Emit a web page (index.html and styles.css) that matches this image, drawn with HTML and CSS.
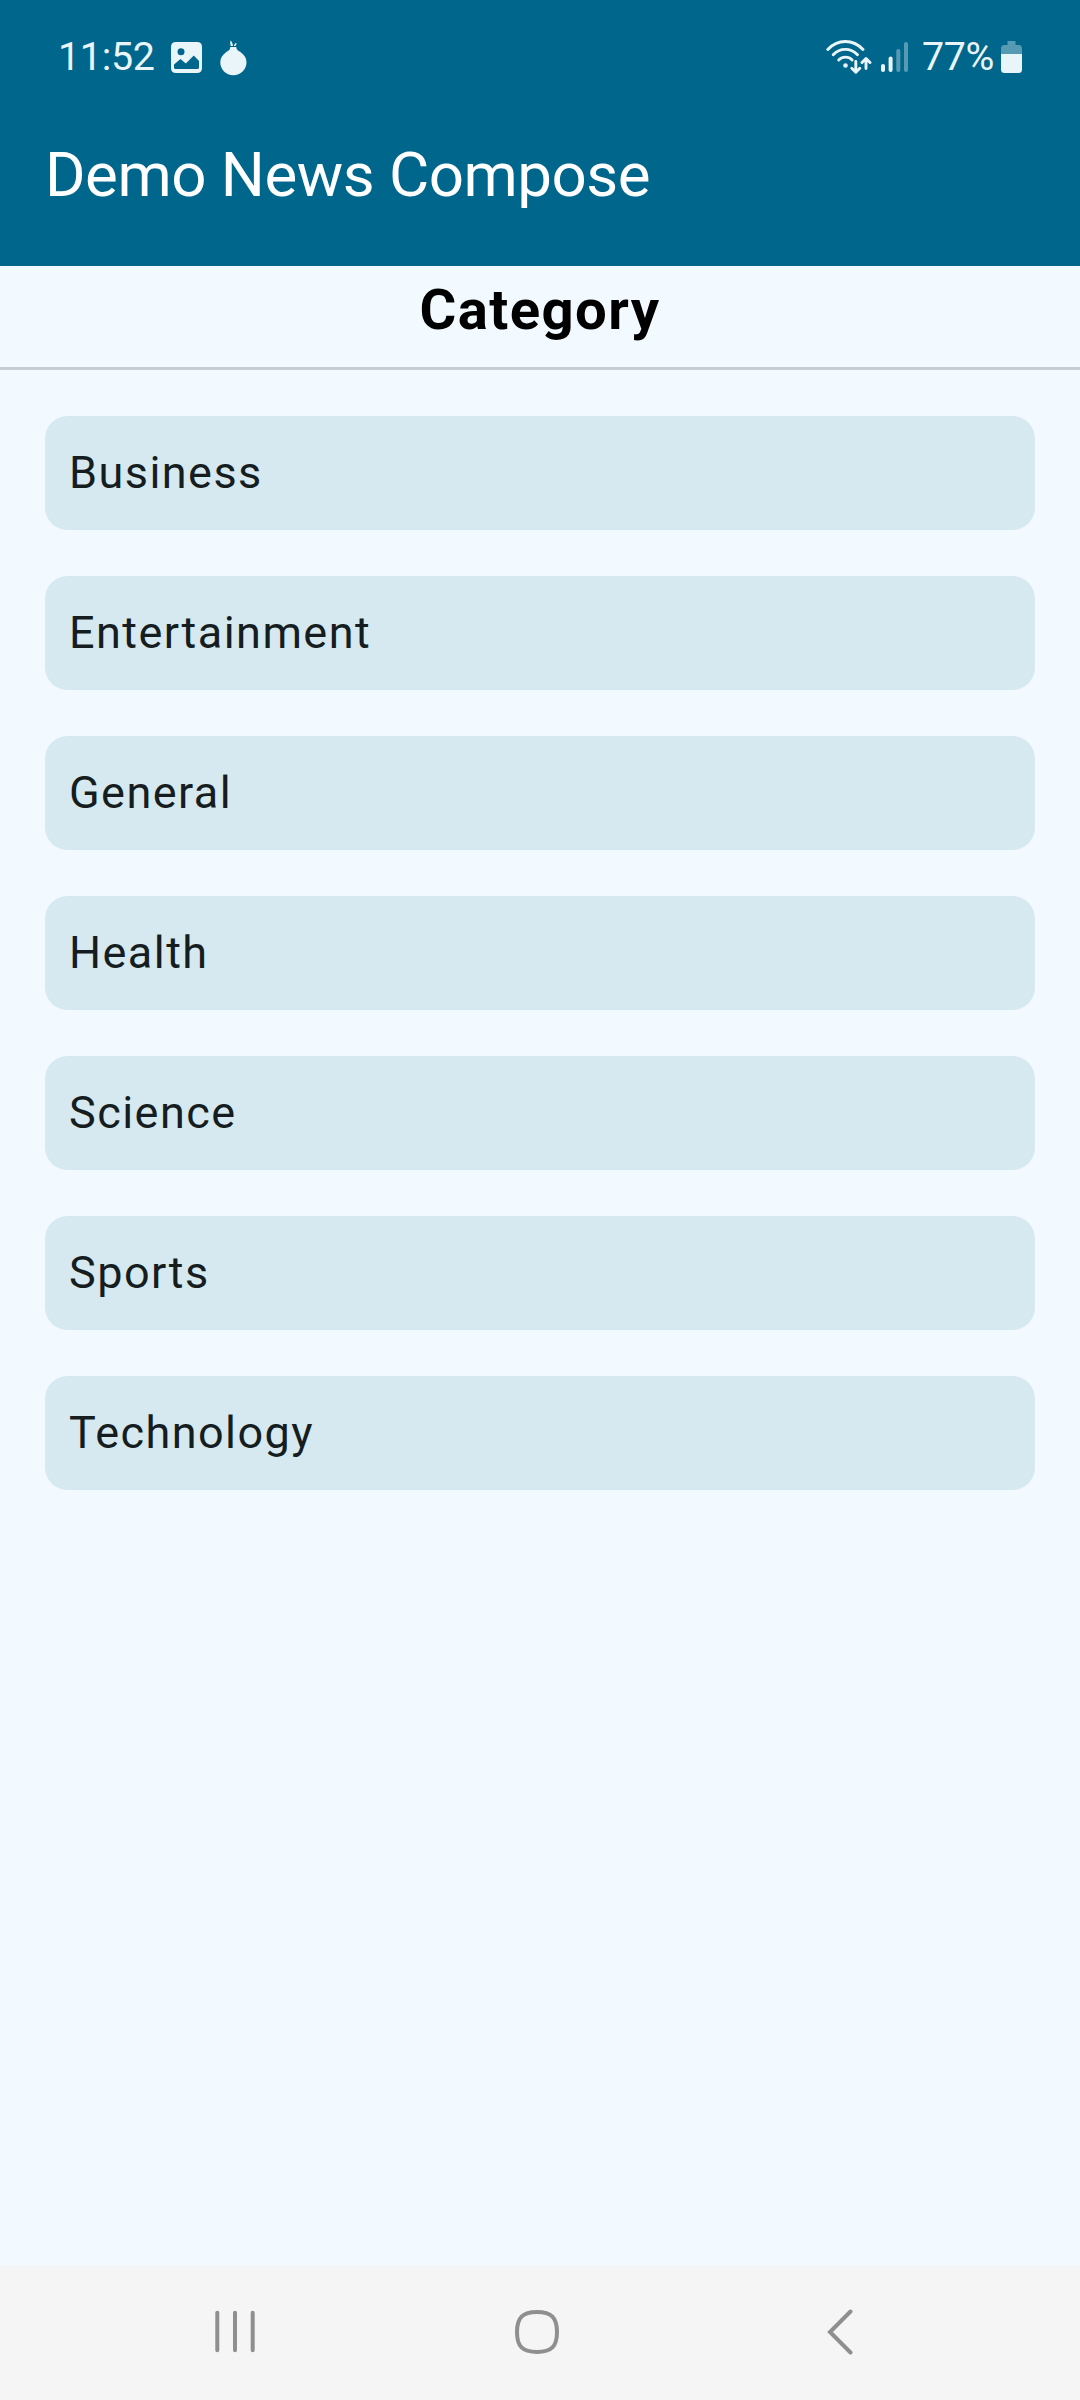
FILE: index.html
```html
<!DOCTYPE html>
<html lang="en">
<head>
<meta charset="utf-8">
<title>Demo News Compose</title>
<link rel="stylesheet" href="styles.css">
</head>
<body>
<div class="screen">
  <header class="app-header">
    <div class="status-bar">
      <div class="status-group">
        <span class="clock">11:52</span>
        <svg class="icon-image" width="31" height="31" viewBox="0 0 31 31">
          <path fill-rule="evenodd" d="M5 0H26Q31 0 31 5V26Q31 31 26 31H5Q0 31 0 26V5Q0 0 5 0ZM10 6.3A3.5 3.5 0 1 0 10 13.3A3.5 3.5 0 1 0 10 6.3ZM3 22.5V25.5Q3 27 4.500 27H26.500Q28 27 28 25.500V19L22.800 13.500L14.800 21.500L9.500 17Z"/>
        </svg>
        <svg class="icon-onion" width="27" height="36" viewBox="0 0 27 36">
          <path d="M10.300 7H16.300C16.300 10 18.500 10.600 21 12.400C24.300 14.700 26.500 18 26.500 22.200C26.500 29.500 20.700 35.200 13.300 35.200C6 35.200.3 29.500.3 22.200C.3 18 2.500 14.700 5.800 12.400C8.300 10.600 10.300 10 10.300 7Z"/>
          <path d="M10.800 6C10 3.500 10 1.800 10.800.2C11.700 2 12.700 3 13 5.900ZM14 5.900C14.300 4.200 15 3.200 16.400 2.900C16.700 4 16.300 5 15.300 6Z"/>
        </svg>
      </div>
      <div class="status-group">
        <svg class="icon-wifi" width="46" height="36" viewBox="0 0 46 36">
          <g fill="none" stroke="currentColor" stroke-width="2.900" stroke-linecap="round" stroke-linejoin="round">
            <path d="M1.800 10.500C11.500-.2 27-.2 37 10.500"/>
            <path d="M7.200 15.800C14 8.500 24.600 8.500 31.500 15.800"/>
            <path d="M12.700 21C16.600 17.200 22.400 17.200 26.200 21"/>
            <path d="M29.800 22.500V33M25.800 29.300L29.800 33.300L33.800 29.300"/>
            <path d="M40 29.500V20M36 23.500L40 19.500L44 23.500"/>
          </g>
          <circle cx="19.500" cy="26.500" r="2.300"/>
        </svg>
        <svg class="icon-signal" width="28" height="30" viewBox="0 0 28 30">
          <rect x="0" y="22" width="4" height="8" rx="2"/>
          <rect x="7.600" y="14.500" width="4" height="15.500" rx="2"/>
          <rect class="faint" x="15.300" y="7" width="4" height="23" rx="2"/>
          <rect class="faint" x="23" y="0" width="4" height="30" rx="2"/>
        </svg>
        <span class="battery-level">77%</span>
        <svg class="icon-battery" width="21" height="32" viewBox="0 0 21 32">
          <path class="faint" d="M6.500 0H14.500V4H17.500Q21 4 21 7.500V13H0V7.500Q0 4 3.500 4H6.500Z"/>
          <path d="M0 13H21V28.500Q21 32 17.500 32H3.500Q0 32 0 28.500Z"/>
        </svg>
      </div>
    </div>
    <h1 class="app-title">Demo News Compose</h1>
  </header>
  <main class="content">
    <h2 class="section-title">Category</h2>
    <ul class="category-list">
      <li class="category">Business</li>
      <li class="category">Entertainment</li>
      <li class="category">General</li>
      <li class="category">Health</li>
      <li class="category">Science</li>
      <li class="category">Sports</li>
      <li class="category">Technology</li>
    </ul>
  </main>
  <nav class="nav-bar">
    <svg width="40" height="46" viewBox="0 0 40 46">
      <path d="M2.300 3.800V41.200M20 3.800V41.200M37.700 3.800V41.200"/>
    </svg>
    <svg class="home" width="44" height="46" viewBox="0 0 44 46">
      <path d="M22 3C36.500 3 42 8.500 42 23C42 37.500 36.500 43 22 43C7.500 43 2 37.500 2 23C2 8.500 7.500 3 22 3Z"/>
    </svg>
    <svg width="26" height="46" viewBox="0 0 26 46">
      <path d="M23.500 2.500L3 23L23.500 43.500"/>
    </svg>
  </nav>
</div>
</body>
</html>
```
FILE: styles.css
```css
* {
  box-sizing: border-box;
  margin: 0;
  padding: 0;
}

body {
  font-family: Roboto, sans-serif;
  background: #f2faff;
}

.screen {
  display: flex;
  flex-direction: column;
  width: 1080px;
  height: 2400px;
}

.app-header {
  height: 266px;
  background: #00668b;
  color: #fff;
}

.status-bar {
  display: flex;
  justify-content: space-between;
  height: 114px;
  padding: 0 58px;
  color: #eaf5fa;
  font-size: 39.4px;
  line-height: 114px;
}

.status-group {
  display: flex;
  align-items: flex-start;
}

.status-group svg {
  flex: none;
  fill: currentColor;
}

.faint {
  opacity: 0.37;
}

.clock {
  width: 113px;
  letter-spacing: -0.3px;
}

.icon-image {
  margin-top: 42px;
}

.icon-onion {
  margin: 40px 0 0 18px;
}

.icon-wifi {
  margin: 39px 9px 0 0;
}

.icon-signal {
  margin: 42px 13px 0 0;
}

.battery-level {
  width: 79px;
  letter-spacing: -0.4px;
}

.icon-battery {
  margin-top: 41px;
}

.app-title {
  padding-left: 45px;
  font-size: 61.875px;
  font-weight: 400;
  letter-spacing: -0.5px;
  line-height: 122px;
}

.content {
  flex: 1;
}

.section-title {
  height: 104px;
  border-bottom: 3px solid #c5cfd3;
  color: #000;
  font-size: 56.25px;
  font-weight: 700;
  letter-spacing: 1.4px;
  line-height: 88px;
  text-align: center;
}

.category-list {
  display: flex;
  flex-direction: column;
  gap: 46px;
  padding: 46px 45px;
  list-style: none;
}

.category {
  height: 114px;
  padding: 0 24px;
  border-radius: 22.5px;
  background: #d6e9f0;
  color: #151d20;
  font-size: 45px;
  letter-spacing: 1.45px;
  line-height: 114px;
}

.nav-bar {
  display: flex;
  align-items: flex-start;
  justify-content: space-between;
  height: 135px;
  padding: 44px 227px 0 215px;
  background: #f5f5f5;
}

.nav-bar svg {
  fill: none;
  stroke: #8f8f8f;
  stroke-width: 4;
  stroke-linecap: round;
}

.home {
  margin: 0 9px 0 0;
}
```
